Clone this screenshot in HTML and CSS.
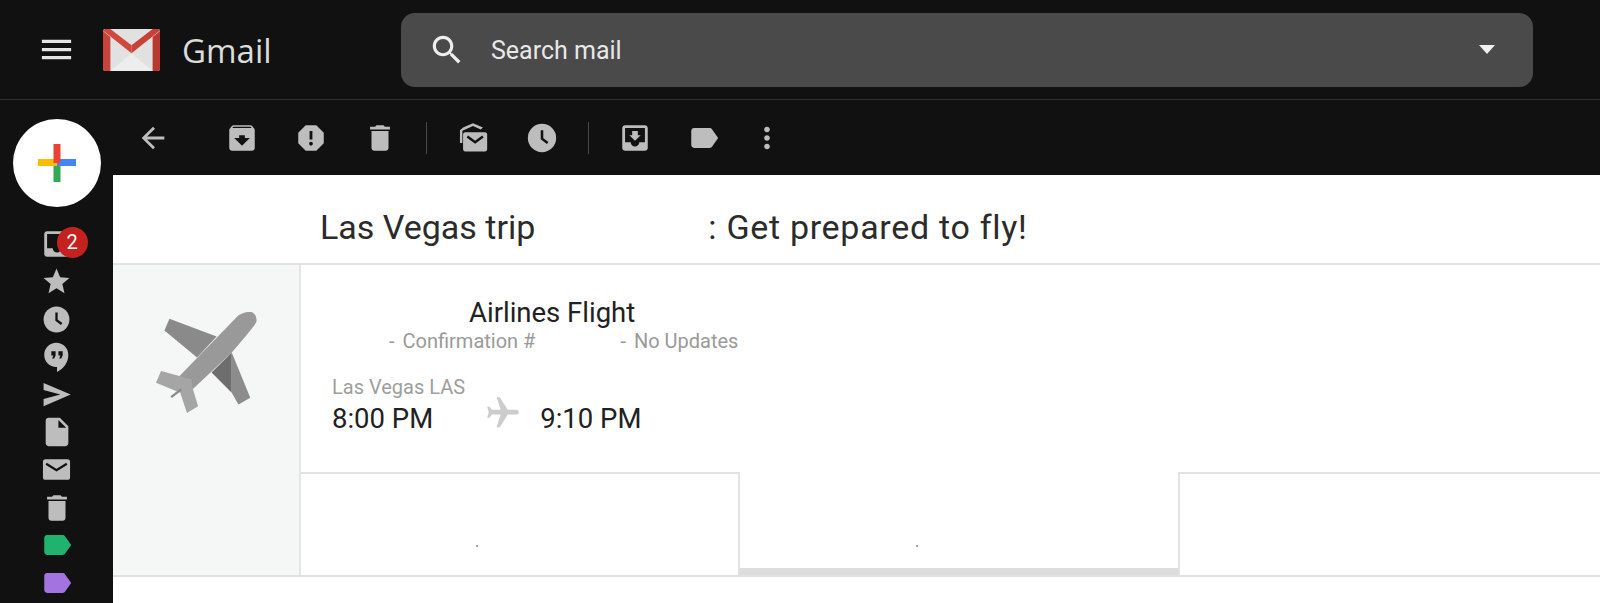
FILE: index.html
```html
<!DOCTYPE html>
<html lang="en">
<head>
    <meta charset="UTF-8">
    <meta name="viewport" content="width=device-width, initial-scale=1.0">
    <title>Gmail</title>
    <link rel="stylesheet" href="styles.css">
</head>
<body>

    <div class="topbar">
        <svg class="menu-icon" viewBox="0 0 24 24"><path d="M3 18h18v-2H3v2zm0-5h18v-2H3v2zm0-7v2h18V6H3z"/></svg>
        <svg class="gmail-logo" viewBox="0 0 170 125">
            <rect x="0" y="0" width="170" height="125" rx="7" fill="#e2e1e1"/>
            <polygon points="22,125 85,72 148,125" fill="#eeeded"/>
            <polygon points="0,4 85,72 85,48 22,0 6,0" fill="#d0473c"/>
            <polygon points="170,4 85,72 85,48 148,0 164,0" fill="#c94036"/>
            <path d="M0 6 L22 24 V125 H7 Q0 125 0 118 Z" fill="#c8433a"/>
            <path d="M170 6 L148 24 V125 H163 Q170 125 170 118 Z" fill="#b9382f"/>
        </svg>
        <span class="brand">Gmail</span>
        <div class="search">
            <svg class="search-icon" viewBox="0 0 24 24"><path d="M15.5 14h-.79l-.28-.27C15.41 12.59 16 11.11 16 9.5 16 5.91 13.09 3 9.5 3S3 5.91 3 9.5 5.91 16 9.5 16c1.61 0 3.09-.59 4.23-1.57l.27.28v.79l5 4.99L20.49 19l-4.99-5zm-6 0C7.01 14 5 11.99 5 9.5S7.01 5 9.5 5 14 7.01 14 9.5 11.99 14 9.5 14z"/></svg>
            <span class="search-text">Search mail</span>
            <span class="search-caret"></span>
        </div>
    </div>

    <div class="main">
        <div class="sidebar">
            <div class="compose">
                <svg viewBox="0 0 38 38">
                    <rect x="0" y="15" width="19" height="7" fill="#fbbc04"/>
                    <rect x="19" y="15" width="19" height="7" fill="#4285f4"/>
                    <rect x="15.500" y="0" width="7" height="19" fill="#ea4335"/>
                    <rect x="15.500" y="22" width="7" height="16" fill="#34a853"/>
                </svg>
            </div>
            <div class="nav-item">
                <svg class="large" viewBox="0 0 24 24"><path d="M19 3H5c-1.100 0-2 .9-2 2v14c0 1.100.9 2 2 2h14c1.100 0 2-.9 2-2V5c0-1.100-.9-2-2-2zm0 12h-4c0 1.660-1.350 3-3 3s-3-1.340-3-3H5V5h14v10z"/></svg>
                <span class="badge">2</span>
            </div>
            <div class="nav-item"><svg viewBox="0 0 24 24"><path d="M12 17.270L18.180 21l-1.640-7.030L22 9.240l-7.190-.61L12 2 9.190 8.630 2 9.240l5.460 4.730L5.820 21z"/></svg></div>
            <div class="nav-item"><svg viewBox="0 0 24 24"><circle cx="12" cy="12" r="10"/><path class="cut" d="M12 6.500V12.500L16 15.500"/></svg></div>
            <div class="nav-item"><svg class="large" viewBox="0 0 24 24"><path d="M11.500 2C6.800 2 3 5.800 3 10.500S6.800 19 11.500 19h.5v3.500c4.860-2.340 8-7 8-12C20 5.800 16.200 2 11.500 2zM11 11l-1 2H8.500l1-2H8V8h3v3zm5 0l-1 2h-1.500l1-2H13V8h3v3z"/></svg></div>
            <div class="nav-item"><svg viewBox="0 0 24 24"><path d="M2 3L23 12 2 21v-5.500L15 12 2 8.500z"/></svg></div>
            <div class="nav-item"><svg class="large" viewBox="0 0 24 24"><path d="M6 2c-1.100 0-1.990.9-1.990 2L4 20c0 1.100.89 2 1.990 2H18c1.100 0 2-.9 2-2V8l-6-6H6zm7 7V3.500L18.500 9H13z"/></svg></div>
            <div class="nav-item"><svg viewBox="0 0 24 24"><rect x="1.500" y="4" width="21" height="16" rx="2"/><path class="cut" d="M4 7.500L12 12.500L20 7.500"/></svg></div>
            <div class="nav-item"><svg class="large" viewBox="0 0 24 24"><path d="M6 19c0 1.100.9 2 2 2h8c1.100 0 2-.9 2-2V7H6v12zM19 4h-3.500l-1-1h-5l-1 1H5v2h14V4z"/></svg></div>
            <div class="nav-item"><svg class="large tag-green" viewBox="0 0 24 24"><path d="M17.630 5.840C17.270 5.330 16.670 5 16 5L5 5.010C3.900 5.010 3 5.900 3 7v10c0 1.100.9 1.990 2 1.990L16 19c.67 0 1.270-.33 1.630-.84L22 12l-4.370-6.160z"/></svg></div>
            <div class="nav-item"><svg class="large tag-purple" viewBox="0 0 24 24"><path d="M17.630 5.840C17.270 5.330 16.670 5 16 5L5 5.010C3.900 5.010 3 5.900 3 7v10c0 1.100.9 1.990 2 1.990L16 19c.67 0 1.270-.33 1.630-.84L22 12l-4.370-6.160z"/></svg></div>
        </div>

        <div class="pane">
            <div class="toolbar">
                <svg class="tool" viewBox="0 0 24 24"><path d="M20 11H7.830l5.590-5.590L12 4l-8 8 8 8 1.410-1.410L7.830 13H20v-2z"/></svg>
                <svg class="tool tool-archive" viewBox="0 0 24 24"><path d="M20.540 5.230l-1.390-1.680C18.880 3.210 18.470 3 18 3H6c-.47 0-.88.21-1.160.55L3.460 5.230C3.170 5.570 3 6.020 3 6.500V19c0 1.100.9 2 2 2h14c1.100 0 2-.9 2-2V6.500c0-.48-.17-.93-.46-1.270zM12 17.500L6.500 12H10v-2h4v2h3.500L12 17.500zM5.120 5l.81-1h12l.94 1H5.120z"/></svg>
                <svg class="tool tool-next" viewBox="0 0 24 24"><path d="M15.730 3H8.270L3 8.270v7.460L8.270 21h7.460L21 15.730V8.270L15.730 3zM12 17.300c-.72 0-1.300-.58-1.300-1.300 0-.72.58-1.300 1.300-1.300.72 0 1.300.58 1.300 1.300 0 .72-.58 1.300-1.300 1.300zm1-4.300h-2V7h2v6z"/></svg>
                <svg class="tool tool-next" viewBox="0 0 24 24"><path d="M6 19c0 1.100.9 2 2 2h8c1.100 0 2-.9 2-2V7H6v12zM19 4h-3.500l-1-1h-5l-1 1H5v2h14V4z"/></svg>
                <span class="tool-sep"></span>
                <svg class="tool" viewBox="0 0 24 24"><path d="M5 4.500L12 1.500L19 4.500L17.500 6L12 3.600L4.500 6.800V15.500H2.800V6.500z"/><path d="M6.500 8h14c.8 0 1.500.7 1.500 1.500V20c0 .8-.7 1.500-1.500 1.500h-14C5.700 21.500 5 20.800 5 20V9.500C5 8.700 5.700 8 6.500 8z"/><path class="cut" d="M8 11L13.500 15L19 11"/></svg>
                <svg class="tool tool-next" viewBox="0 0 24 24"><circle cx="12" cy="12" r="10"/><path class="cut" d="M12 6.500V12.500L16 15.500"/></svg>
                <span class="tool-sep"></span>
                <svg class="tool" viewBox="0 0 24 24"><path d="M19 3H4.990c-1.110 0-1.980.89-1.980 2L3 19c0 1.100.88 2 1.990 2H19c1.100 0 2-.9 2-2V5c0-1.110-.9-2-2-2zm0 12h-4c0 1.660-1.350 3-3 3s-3-1.340-3-3H4.990V5H19v10zm-3-5h-2V7h-4v3H8l4 4 4-4z"/></svg>
                <svg class="tool tool-next" viewBox="0 0 24 24"><path d="M17.630 5.840C17.270 5.330 16.670 5 16 5L5 5.010C3.900 5.010 3 5.900 3 7v10c0 1.100.9 1.990 2 1.990L16 19c.67 0 1.270-.33 1.630-.84L22 12l-4.370-6.160z"/></svg>
                <svg class="tool tool-more" viewBox="0 0 24 24"><path d="M12 8c1.100 0 2-.9 2-2s-.9-2-2-2-2 .9-2 2 .9 2 2 2zm0 2c-1.100 0-2 .9-2 2s.9 2 2 2 2-.9 2-2-.9-2-2-2zm0 6c-1.100 0-2 .9-2 2s.9 2 2 2 2-.9 2-2-.9-2-2-2z"/></svg>
            </div>

            <div class="message">
                <h1 class="subject">
                    <span>Las Vegas trip</span>
                    <span class="subject-rest">: Get prepared to fly!</span>
                </h1>
                <div class="card">
                    <div class="card-side">
                        <svg class="big-plane" viewBox="140 155 300 300">
                            <polygon points="180,175 320,228 262,290 165,210" fill="#8a8a8a"/>
                            <polygon points="365,275 305,335 365,395" fill="#6e6e6e"/>
                            <polygon points="365,275 365,395 385,430 420,410" fill="#8c8c8c"/>
                            <path d="M205 350L385 165Q405 152 425 155Q442 165 438 185Q430 200 365 275L248 385Z" fill="#999999"/>
                            <polygon points="155,330 245,355 250,385 265,435 232,455 212,395 140,365" fill="#a5a5a5"/>
                            <line x1="185" y1="408" x2="215" y2="385" stroke="#8a8a8a" stroke-width="7"/>
                        </svg>
                    </div>
                    <div class="card-body">
                        <div class="flight">
                            <div class="flight-title">Airlines Flight</div>
                            <div class="flight-meta">
                                <span class="meta-first"><span class="dash">-</span>Confirmation #</span>
                                <span class="meta-second"><span class="dash">-</span>No Updates</span>
                            </div>
                            <div class="flight-city">Las Vegas LAS</div>
                            <div class="flight-times">
                                <span>8:00 PM</span>
                                <svg class="small-plane" viewBox="0 0 24 24"><path transform="rotate(90 12 12)" d="M21 16v-2l-8-5V3.500c0-.83-.67-1.500-1.500-1.500S10 2.670 10 3.500V9l-8 5v2l8-2.500V19l-2 1.500V22l3.500-1 3.500 1v-1.500L13 19v-5.500l8 2.500z"/></svg>
                                <span>9:10 PM</span>
                            </div>
                        </div>
                        <div class="tiles">
                            <div class="tile tile-one"><span class="speck"></span></div>
                            <div class="tile tile-two"><span class="speck"></span></div>
                            <div class="tile tile-three"></div>
                        </div>
                    </div>
                </div>
            </div>
        </div>
    </div>

</body>
</html>
```

FILE: styles.css
```css
html, body {
    margin: 0;
    padding: 0;
    height: 603px;
    overflow: hidden;
    background-color: #111111;
    font-family: Roboto, Arial, sans-serif;
}
.topbar {
    display: flex;
    align-items: center;
    height: 99px;
    border-bottom: 1px solid #2f2f2f;
}
.menu-icon {
    width: 39px;
    height: 39px;
    margin-left: 37px;
    fill: #e4e4e4;
}
.gmail-logo {
    width: 57px;
    height: 42px;
    margin-left: 27px;
}
.brand {
    margin-left: 22px;
    margin-top: 2px;
    width: 219px;
    font-family: "Open Sans", Arial, sans-serif;
    font-size: 33px;
    color: #dcdcdc;
}
.search {
    display: flex;
    align-items: center;
    width: 1132px;
    height: 74px;
    background-color: #4a4a4a;
    border-radius: 14px;
}
.search-icon {
    width: 38px;
    height: 38px;
    margin-left: 27px;
    fill: #eeeeee;
}
.search-text {
    margin-left: 25px;
    padding-top: 2px;
    font-size: 25px;
    color: #e8e8e8;
}
.search-caret {
    margin-left: auto;
    margin-right: 38px;
    border-left: 8px solid transparent;
    border-right: 8px solid transparent;
    border-top: 9px solid #f0f0f0;
}
.main {
    display: flex;
    height: 503px;
}
.sidebar {
    width: 113px;
    flex-shrink: 0;
    display: flex;
    flex-direction: column;
    align-items: center;
}
.compose {
    width: 88px;
    height: 88px;
    margin-top: 19px;
    margin-bottom: 18px;
    border-radius: 50%;
    background-color: #ffffff;
    display: flex;
    align-items: center;
    justify-content: center;
    flex-shrink: 0;
}
.compose svg {
    width: 38px;
    height: 38px;
}
.nav-item {
    position: relative;
    flex-shrink: 0;
    width: 32px;
    height: 37.700px;
    display: flex;
    align-items: center;
    justify-content: center;
}
.nav-item svg {
    width: 31px;
    height: 31px;
    flex-shrink: 0;
    fill: #bdbdbd;
}
.nav-item svg.large {
    width: 34px;
    height: 34px;
}
.nav-item svg.tag-green {
    fill: #1fb36f;
}
.nav-item svg.tag-purple {
    fill: #a374e0;
}
.cut {
    fill: none;
    stroke: #111111;
    stroke-width: 1.800;
}
.badge {
    position: absolute;
    top: 2px;
    left: 16px;
    width: 31px;
    height: 31px;
    line-height: 31px;
    border-radius: 50%;
    background-color: #c5221f;
    color: #ffffff;
    font-size: 20px;
    text-align: center;
}
.pane {
    flex-grow: 1;
    min-width: 0;
    display: flex;
    flex-direction: column;
}
.toolbar {
    display: flex;
    align-items: center;
    height: 75px;
    padding-left: 23px;
    flex-shrink: 0;
}
.tool {
    width: 34px;
    height: 34px;
    fill: #bdbdbd;
    flex-shrink: 0;
}
.tool-archive {
    margin-left: 55px;
}
.tool-next {
    margin-left: 35px;
}
.tool-more {
    margin-left: 29px;
}
.tool-sep {
    width: 1px;
    height: 32px;
    margin: 0 29px;
    background-color: #484848;
}
.message {
    flex-grow: 1;
    background-color: #ffffff;
}
.subject {
    display: flex;
    align-items: center;
    height: 72px;
    margin: 0;
    padding-top: 16px;
    padding-left: 207px;
    border-bottom: 2px solid #e2e2e2;
    font-weight: 400;
    font-size: 34px;
    color: #2b2b2b;
}
.subject-rest {
    margin-left: 173px;
    letter-spacing: 0.700px;
}
.card {
    display: flex;
    height: 310px;
    border-bottom: 2px solid #e0e0e0;
}
.card-side {
    width: 186px;
    flex-shrink: 0;
    background-color: #f5f6f6;
    border-right: 2px solid #e6e6e6;
    display: flex;
    justify-content: center;
    padding-top: 47px;
    box-sizing: content-box;
    height: 263px;
}
.big-plane {
    width: 101px;
    height: 101px;
}
.card-body {
    flex-grow: 1;
    min-width: 0;
    display: flex;
    flex-direction: column;
}
.flight {
    height: 207px;
    padding-left: 31px;
    box-sizing: border-box;
}
.flight-title {
    margin-top: 31px;
    margin-left: 137px;
    font-size: 27.500px;
    line-height: 34px;
    color: #212121;
}
.flight-meta {
    display: flex;
    margin-top: -1px;
    font-size: 20px;
    line-height: 24px;
    color: #9a9a9a;
}
.dash {
    margin-right: 8px;
}
.meta-first {
    margin-left: 57px;
}
.meta-second {
    margin-left: 85px;
}
.flight-city {
    margin-top: 22px;
    font-size: 20px;
    line-height: 24px;
    color: #9e9e9e;
}
.flight-times {
    display: flex;
    align-items: center;
    margin-top: 2px;
    font-size: 27.500px;
    line-height: 36px;
    color: #212121;
}
.small-plane {
    width: 38px;
    height: 38px;
    margin-left: 51px;
    margin-right: 18px;
    margin-top: -13px;
    fill: #cccccc;
}
.tiles {
    display: flex;
    flex-grow: 1;
}
.tile {
    box-sizing: border-box;
    display: flex;
    align-items: flex-end;
    justify-content: center;
    padding-bottom: 28px;
}
.tile-one {
    width: 439px;
    border-top: 2px solid #e2e2e2;
    border-right: 2px solid #e2e2e2;
}
.tile-two {
    width: 438px;
    border-bottom: 7px solid #dcdcdc;
    padding-bottom: 21px;
}
.tile-three {
    flex-grow: 1;
    border-top: 2px solid #e2e2e2;
    border-left: 2px solid #e2e2e2;
}
.speck {
    width: 2px;
    height: 2px;
    background-color: #aaaaaa;
    margin-left: -85px;
}
```
